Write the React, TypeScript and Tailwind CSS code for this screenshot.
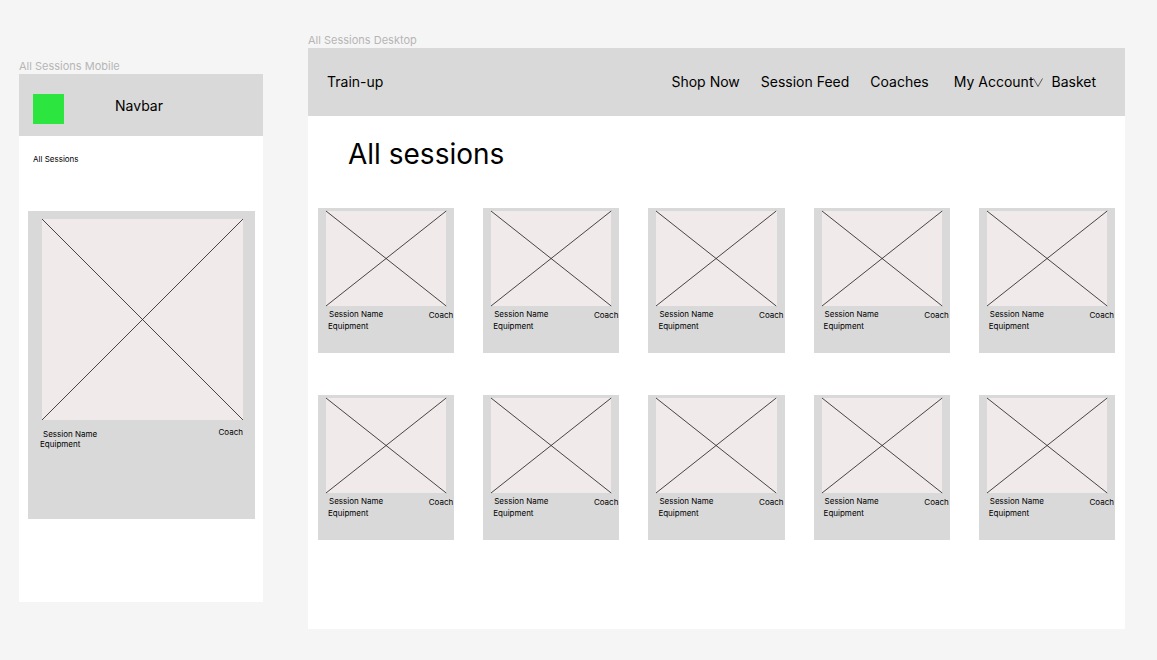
const sessions = Array.from({ length: 10 }, (_, i) => i);

function ImagePlaceholder({ className }: { className: string }) {
  return (
    <svg
      viewBox="0 0 100 100"
      preserveAspectRatio="none"
      aria-hidden="true"
      className={`block overflow-visible bg-[#f0eaea] ${className}`}
    >
      <path
        d="M0 0 L100 100 M100 0 L0 100"
        fill="none"
        stroke="#1c1a1a"
        strokeWidth="0.8"
        vectorEffect="non-scaling-stroke"
      />
    </svg>
  );
}

function SessionCard() {
  return (
    <article className="bg-[#d9d9d9] pt-[3px] pb-[21px]">
      <ImagePlaceholder className="mr-2 ml-2 h-[95px] w-[calc(100%-16px)]" />
      <div className="flex items-start justify-between pt-0.5 pr-px pl-[10px] text-[8px] leading-3">
        <div>
          <h2 className="pl-px">Session Name</h2>
          <p>Equipment</p>
        </div>
        <p className="pt-px">Coach</p>
      </div>
    </article>
  );
}

function MobileFrame() {
  return (
    <section className="w-61 shrink-0 pt-[26px]">
      <p className="h-4 text-[11px] leading-4 text-[#b5b5b5]">All Sessions Mobile</p>
      <div className="bg-white pb-[83px]">
        <header className="flex h-[62px] items-center bg-[#d9d9d9] pl-[14px]">
          <div className="mt-[7px] h-[30px] w-[31px] bg-[#2ce53f]" />
          <span className="ml-[51px] pt-0.5 text-sm">Navbar</span>
        </header>
        <h1 className="px-[14px] pt-[17px] text-[8px] leading-3">All Sessions</h1>
        <article className="mt-[46px] mr-2 ml-[9px] bg-[#d9d9d9] pt-2 pb-[70px]">
          <div className="pr-3 pl-[14px]">
            <ImagePlaceholder className="aspect-square w-full" />
          </div>
          <div className="flex items-start justify-between pt-[7px] pr-3 pl-3 text-[8px] leading-[10px]">
            <div className="pt-0.5">
              <h2 className="pl-[3px]">Session Name</h2>
              <p>Equipment</p>
            </div>
            <p>Coach</p>
          </div>
        </article>
      </div>
    </section>
  );
}

function DesktopFrame() {
  return (
    <section className="min-w-0 flex-1">
      <p className="h-4 text-[11px] leading-4 text-[#b5b5b5]">All Sessions Desktop</p>
      <div className="bg-white pb-[89px]">
        <header className="flex h-[68px] items-center justify-between bg-[#d9d9d9] pr-[29px] pl-[19px] text-sm">
          <a href="#home">Train-up</a>
          <nav className="flex items-center gap-[21px]">
            <a href="#shop">Shop Now</a>
            <a href="#feed">Session Feed</a>
            <a href="#coaches">Coaches</a>
            <div className="flex items-center gap-2 pl-1">
              <button type="button" className="flex items-center">
                My Account
                <svg width="10" height="9" viewBox="0 0 10 9" aria-hidden="true">
                  <path d="M0.5 0.5 L5 8.5 L9.5 0.5" fill="none" stroke="#222" strokeWidth="0.7" />
                </svg>
              </button>
              <a href="#basket">Basket</a>
            </div>
          </nav>
        </header>
        <h1 className="px-10 pt-[18px] text-[28px] leading-10">All sessions</h1>
        <div className="mt-[34px] grid grid-cols-5 gap-x-[29px] gap-y-[42px] pr-[10px] pl-[10px]">
          {sessions.map((id) => (
            <SessionCard key={id} />
          ))}
        </div>
      </div>
    </section>
  );
}

export default function App() {
  return (
    <main className="flex min-h-screen items-start gap-[45px] bg-[#f5f5f5] pt-8 pr-8 pb-8 pl-[19px] font-['Inter',sans-serif] text-black">
      <MobileFrame />
      <DesktopFrame />
    </main>
  );
}
